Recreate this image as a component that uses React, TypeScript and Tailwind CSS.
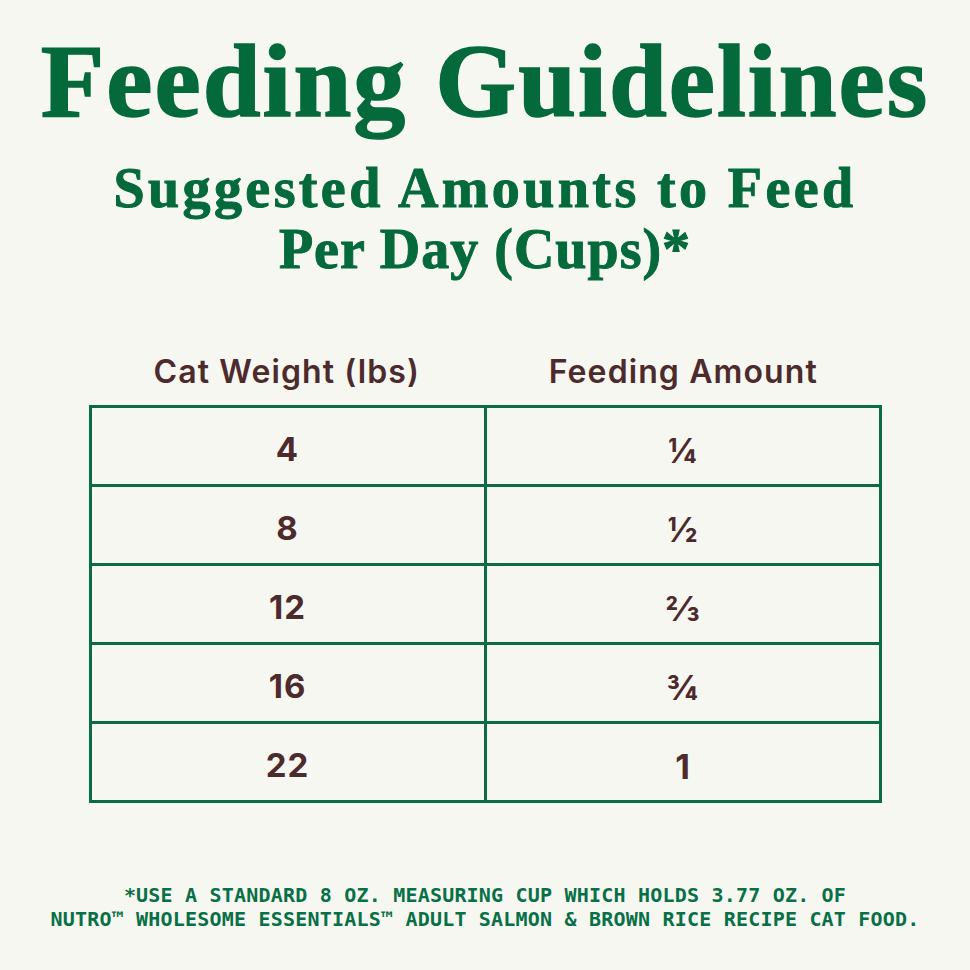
import React from "react";

const rows: [string, string][] = [
  ["4", "¼"],
  ["8", "½"],
  ["12", "⅔"],
  ["16", "¾"],
  ["22", "1"],
];

export default function App() {
  return (
    <div className="min-h-screen w-full bg-[#f7f7f2] flex flex-col items-center">
      <h1
        className="pt-[29px] text-[104px] leading-[104px] font-bold tracking-[2px] text-[#056a3b] whitespace-nowrap [-webkit-text-stroke:1.5px_#056a3b]"
        style={{ fontFamily: '"Liberation Serif", serif' }}
      >
        Feeding Guidelines
      </h1>
      <h2
        className="mt-[25px] text-[56px] leading-[61px] font-bold text-[#056a3b] text-center [-webkit-text-stroke:1px_#056a3b]"
        style={{ fontFamily: '"Liberation Serif", serif' }}
      >
        <span className="tracking-[3.4px]">Suggested Amounts to Feed</span>
        <br />
        <span className="tracking-[1px]">Per Day (Cups)*</span>
      </h2>

      <div
        className="mt-[72px] w-[793px] text-[#4d2a2b]"
        style={{ fontFamily: 'Inter, "Noto Sans", sans-serif' }}
      >
        <div className="grid grid-cols-2 h-[40px] text-[32px] leading-[40px] font-semibold tracking-[1.1px]">
          <div className="text-center">Cat Weight (lbs)</div>
          <div className="text-center">Feeding Amount</div>
        </div>
        <div className="mt-[13px] border-[3px] border-[#0b6b46]">
          {rows.map(([w, a], i) => (
            <div
              key={w}
              className={`grid grid-cols-[1fr_3px_1fr] ${
                i > 0 ? "h-[79px] border-t-[3px] border-[#0b6b46]" : "h-[76px]"
              }`}
            >
              <div className="flex items-center justify-center pt-2 text-[33px] font-bold tracking-[1px]">
                {w}
              </div>
              <div className="bg-[#0b6b46]" />
              <div className="flex items-center justify-center pt-2 text-[34px] font-bold">
                {a}
              </div>
            </div>
          ))}
        </div>
      </div>

      <p
        className="mt-[80px] text-[20px] leading-[24px] font-bold tracking-[0.2px] text-[#087046] text-center whitespace-nowrap"
        style={{ fontFamily: '"DejaVu Sans Mono", monospace' }}
      >
        *USE A STANDARD 8 OZ. MEASURING CUP WHICH HOLDS 3.77 OZ. OF
        <br />
        NUTRO™ WHOLESOME ESSENTIALS™ ADULT SALMON &amp; BROWN RICE RECIPE CAT FOOD.
      </p>
    </div>
  );
}
